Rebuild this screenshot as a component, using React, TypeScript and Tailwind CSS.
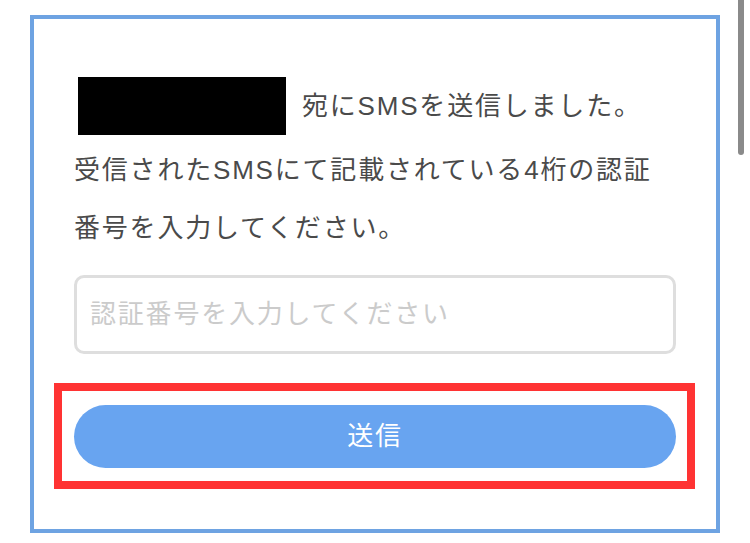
import React, { useState } from 'react';

export default function App() {
    const [code, setCode] = useState('');

    return (
        <div
            className="relative w-[750px] h-[543px] overflow-hidden bg-white px-[30px] pt-[15px] text-[#4a4a4a]"
            style={{ fontFamily: '"Liberation Sans", "Noto Sans CJK JP", sans-serif' }}
        >
            <div className="border-4 border-[#6ea3e2] px-[40px] pt-[58px] pb-[40px]">
                {/* phone number (masked) */}
                <div className="flex items-center h-[58px] text-[26px] tracking-[1.8px]">
                    <div className="ml-[4px] w-[208px] h-[58px] bg-black shrink-0" />
                    <span className="ml-[16px]">宛にSMSを送信しました。</span>
                </div>

                <p className="mt-[6px] text-[26px] leading-[58px] tracking-[1.8px]">
                    受信されたSMSにて記載されている4桁の認証番号を入力してください。
                </p>

                <input
                    value={code}
                    onChange={(e) => setCode(e.target.value)}
                    placeholder="認証番号を入力してください"
                    className="mt-[18px] block w-full h-[79px] rounded-[10px] border-[3px] border-[#dedede] bg-white pl-[13px] text-[26px] tracking-[1.8px] outline-none placeholder:text-[#cbcbcb]"
                />

                <div className="mt-[29px] -ml-[20px] -mr-[19px] border-[8px] border-[#ff3333] pl-[12px] pr-[11px] pt-[14px] pb-[13px]">
                    <button className="w-full h-[63px] rounded-full bg-[#68a4f0] text-white text-[26px] tracking-[1.8px]">
                        送信
                    </button>
                </div>
            </div>

            {/* scroll indicator */}
            <div className="absolute right-[6px] top-0 w-[6px] h-[155px] rounded-b-full bg-[#8a8a8a]" />
        </div>
    );
}
